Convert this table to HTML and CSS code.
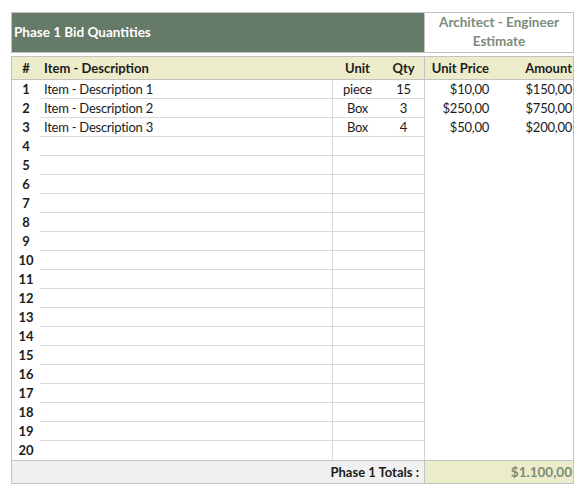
FILE: index.html
```html
<!DOCTYPE html>
<html>
<head>
<meta charset="utf-8">
<link rel="stylesheet" href="styles.css">
</head>
<body>
<div class="sheet">
  <div class="title-row">
    <div class="title">Phase 1 Bid Quantities</div>
    <div class="estimate-title">Architect - Engineer<br>Estimate</div>
  </div>
  <div class="table">
    <div class="row head">
      <div class="c num">#</div>
      <div class="c desc">Item - Description</div>
      <div class="c unit">Unit</div>
      <div class="c qty">Qty</div>
      <div class="c price">Unit Price</div>
      <div class="c amt">Amount</div>
    </div>
    <div class="row"><div class="c num">1</div><div class="c desc">Item - Description 1</div><div class="c unit">piece</div><div class="c qty">15</div><div class="c price">$10,00</div><div class="c amt">$150,00</div></div>
    <div class="row"><div class="c num">2</div><div class="c desc">Item - Description 2</div><div class="c unit">Box</div><div class="c qty">3</div><div class="c price">$250,00</div><div class="c amt">$750,00</div></div>
    <div class="row"><div class="c num">3</div><div class="c desc">Item - Description 3</div><div class="c unit">Box</div><div class="c qty">4</div><div class="c price">$50,00</div><div class="c amt">$200,00</div></div>
    <div class="row"><div class="c num">4</div><div class="c desc"></div><div class="c unit"></div><div class="c qty"></div><div class="c price"></div><div class="c amt"></div></div>
    <div class="row"><div class="c num">5</div><div class="c desc"></div><div class="c unit"></div><div class="c qty"></div><div class="c price"></div><div class="c amt"></div></div>
    <div class="row"><div class="c num">6</div><div class="c desc"></div><div class="c unit"></div><div class="c qty"></div><div class="c price"></div><div class="c amt"></div></div>
    <div class="row"><div class="c num">7</div><div class="c desc"></div><div class="c unit"></div><div class="c qty"></div><div class="c price"></div><div class="c amt"></div></div>
    <div class="row"><div class="c num">8</div><div class="c desc"></div><div class="c unit"></div><div class="c qty"></div><div class="c price"></div><div class="c amt"></div></div>
    <div class="row"><div class="c num">9</div><div class="c desc"></div><div class="c unit"></div><div class="c qty"></div><div class="c price"></div><div class="c amt"></div></div>
    <div class="row"><div class="c num">10</div><div class="c desc"></div><div class="c unit"></div><div class="c qty"></div><div class="c price"></div><div class="c amt"></div></div>
    <div class="row"><div class="c num">11</div><div class="c desc"></div><div class="c unit"></div><div class="c qty"></div><div class="c price"></div><div class="c amt"></div></div>
    <div class="row"><div class="c num">12</div><div class="c desc"></div><div class="c unit"></div><div class="c qty"></div><div class="c price"></div><div class="c amt"></div></div>
    <div class="row"><div class="c num">13</div><div class="c desc"></div><div class="c unit"></div><div class="c qty"></div><div class="c price"></div><div class="c amt"></div></div>
    <div class="row"><div class="c num">14</div><div class="c desc"></div><div class="c unit"></div><div class="c qty"></div><div class="c price"></div><div class="c amt"></div></div>
    <div class="row"><div class="c num">15</div><div class="c desc"></div><div class="c unit"></div><div class="c qty"></div><div class="c price"></div><div class="c amt"></div></div>
    <div class="row"><div class="c num">16</div><div class="c desc"></div><div class="c unit"></div><div class="c qty"></div><div class="c price"></div><div class="c amt"></div></div>
    <div class="row"><div class="c num">17</div><div class="c desc"></div><div class="c unit"></div><div class="c qty"></div><div class="c price"></div><div class="c amt"></div></div>
    <div class="row"><div class="c num">18</div><div class="c desc"></div><div class="c unit"></div><div class="c qty"></div><div class="c price"></div><div class="c amt"></div></div>
    <div class="row"><div class="c num">19</div><div class="c desc"></div><div class="c unit"></div><div class="c qty"></div><div class="c price"></div><div class="c amt"></div></div>
    <div class="row last"><div class="c num">20</div><div class="c desc"></div><div class="c unit"></div><div class="c qty"></div><div class="c price"></div><div class="c amt"></div></div>
    <div class="row foot">
      <div class="c totals-label">Phase 1 Totals :</div>
      <div class="c totals-value">$1.100,00</div>
    </div>
  </div>
</div>
</body>
</html>
```

FILE: styles.css
```css
* { box-sizing: border-box; }
html, body { margin: 0; padding: 0; background: #ffffff; }
body {
  font-family: Lato, "Noto Sans", sans-serif;
  font-size: 13px;
  letter-spacing: -0.25px;
  color: #1c1c1c;
}
.sheet {
  padding: 12px 0 0 11px;
  width: 574px;
}
.title-row {
  display: flex;
  height: 41px;
}
.title {
  width: 414px;
  background: #657a67;
  border: 1px solid #c3c3c3;
  color: #ffffff;
  font-weight: bold;
  font-size: 13.5px;
  letter-spacing: 0;
  padding-left: 2px;
  padding-bottom: 2px;
  display: flex;
  align-items: center;
}
.estimate-title {
  width: 149px;
  border: 1px solid #c3c3c3;
  border-left: none;
  color: #7c8b7a;
  font-weight: bold;
  font-size: 13.5px;
  letter-spacing: 0;
  text-align: center;
  line-height: 19px;
  padding-top: 0;
}
.table {
  margin-top: 3px;
  border: 1px solid #c3c3c3;
  width: 563px;
}
.row {
  display: grid;
  grid-template-columns: 28px 293px 48px 44px 72px 76px;
  height: 19px;
  line-height: 18px;
}
.c { white-space: nowrap; overflow: hidden; }
.num { text-align: center; font-weight: bold; letter-spacing: 0; }
.desc { border-right: 1px solid #dadada; border-bottom: 1px solid #dadada; padding-left: 4px; }
.unit { text-align: center; border-bottom: 1px solid #dadada; padding-left: 1px; }
.qty { text-align: center; border-bottom: 1px solid #dadada; border-right: 1px solid #d2d2d2; padding-left: 2px; }
.price { text-align: right; padding-right: 8px; }
.amt { text-align: right; padding-right: 1px; }
.last .desc, .last .unit, .last .qty { border-bottom: none; }

.head {
  background: #ececcb;
  font-weight: bold;
  letter-spacing: 0;
  height: 23px;
  line-height: 22px;
  border-bottom: 1px solid #c3c3c3;
}
.head .desc, .head .unit, .head .qty { border-bottom: none; }
.head .desc { border-right: none; }
.head .qty { border-right: 1px solid #c3c3c3; }
.head .c { line-height: 22px; }

.foot {
  grid-template-columns: 413px 148px;
  height: 23px;
  line-height: 22px;
  border-top: 1px solid #c3c3c3;
  letter-spacing: 0;
}
.totals-label {
  background: #f0f0f0;
  font-weight: bold;
  text-align: right;
  padding-right: 5px;
  border-right: 1px solid #c3c3c3;
}
.totals-value {
  background: #ececcb;
  color: #7a8e76;
  font-weight: bold;
  font-size: 13.5px;
  text-align: right;
  padding-right: 1px;
}
```
